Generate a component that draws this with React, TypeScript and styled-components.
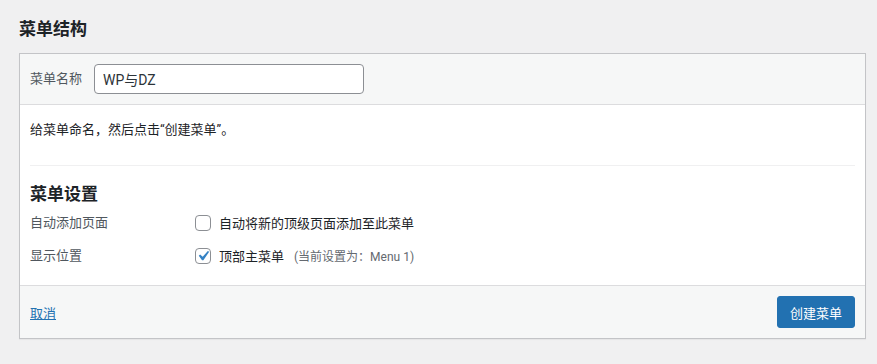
import React, { useState } from "react";
import styled, { createGlobalStyle } from "styled-components";

const GlobalStyle = createGlobalStyle`
  html, body {
    margin: 0;
    padding: 0;
    background: #f0f0f1;
  }
  body {
    font-family: "Segoe UI", Roboto, "Noto Sans CJK SC", sans-serif;
    font-size: 13px;
    color: #1d2327;
  }
`;

const Page = styled.div`
  padding: 17px 11px 26px 19px;
`;

const Title = styled.h2`
  margin: 0 0 12px;
  font-size: 17px;
  line-height: 24px;
  font-weight: 700;
  color: #1d2327;
`;

const Panel = styled.div`
  border: 1px solid #c3c4c7;
  background: #fff;
  box-shadow: 0 1px 1px rgba(0, 0, 0, 0.04);
`;

const Header = styled.div`
  display: flex;
  align-items: center;
  gap: 12px;
  height: 50px;
  padding: 0 10px;
  background: #f6f7f7;
  border-bottom: 1px solid #dcdcde;
`;

const Label = styled.label`
  color: #50575e;
  font-size: 13px;
  line-height: 18px;
`;

const NameInput = styled.input`
  box-sizing: border-box;
  width: 270px;
  height: 30px;
  padding: 0 8px;
  border: 1px solid #8c8f94;
  border-radius: 4px;
  font-family: inherit;
  font-size: 14px;
  color: #2c3338;
  background: #fff;
  outline: none;
`;

const Body = styled.div`
  padding: 16px 10px 13px;
`;

const Hint = styled.p`
  margin: 0 0 26px;
  line-height: 18px;
`;

const Divider = styled.hr`
  margin: 0;
  border: 0;
  border-top: 1px solid #f0f0f1;
`;

const SectionTitle = styled.h3`
  margin: 16px 0 0;
  font-size: 17px;
  line-height: 24px;
  font-weight: 700;
`;

const Row = styled.div`
  display: flex;
  align-items: center;
  height: 33px;
`;

const RowLabel = styled.div`
  width: 165px;
  color: #50575e;
  line-height: 18px;
`;

const Option = styled.label`
  display: flex;
  align-items: center;
  gap: 8px;
  cursor: pointer;
`;

const Box = styled.span<{ $checked: boolean }>`
  box-sizing: border-box;
  width: 16px;
  height: 16px;
  border: 1px solid #8c8f94;
  border-radius: 4px;
  background: #fff;
  display: flex;
  align-items: center;
  justify-content: center;
  overflow: visible;
  svg {
    display: ${({ $checked }) => ($checked ? "block" : "none")};
    flex: none;
  }
`;

const Note = styled.span`
  margin-left: 10px;
  color: #646970;
  font-size: 12px;
`;

const Footer = styled.div`
  display: flex;
  align-items: center;
  justify-content: space-between;
  padding: 10px;
  background: #f6f7f7;
  border-top: 1px solid #dcdcde;
`;

const CancelLink = styled.a`
  color: #2271b1;
  text-decoration: underline;
  cursor: pointer;
`;

const PrimaryButton = styled.button`
  height: 32px;
  padding: 0 12px;
  border: 1px solid #2271b1;
  border-radius: 3px;
  background: #2271b1;
  color: #fff;
  font-family: inherit;
  font-size: 13px;
  cursor: pointer;
`;

const Checkbox: React.FC<{ checked: boolean; onToggle: () => void; children: React.ReactNode }> = ({
  checked,
  onToggle,
  children,
}) => (
  <Option onClick={onToggle}>
    <Box $checked={checked}>
      <svg width="20" height="20" viewBox="0 0 20 20">
        <path d="M14.83 4.89l1.34.94-5.81 8.38H9.02L5.78 9.67l1.34-1.25 2.57 2.4z" fill="#3582c4" />
      </svg>
    </Box>
    {children}
  </Option>
);

export default function App() {
  const [name, setName] = useState("WP与DZ");
  const [autoAdd, setAutoAdd] = useState(false);
  const [primary, setPrimary] = useState(true);

  return (
    <Page>
      <GlobalStyle />
      <Title>菜单结构</Title>
      <Panel>
        <Header>
          <Label>菜单名称</Label>
          <NameInput value={name} onChange={(e) => setName(e.target.value)} />
        </Header>
        <Body>
          <Hint>给菜单命名，然后点击“创建菜单”。</Hint>
          <Divider />
          <SectionTitle>菜单设置</SectionTitle>
          <Row>
            <RowLabel>自动添加页面</RowLabel>
            <Checkbox checked={autoAdd} onToggle={() => setAutoAdd(!autoAdd)}>
              自动将新的顶级页面添加至此菜单
            </Checkbox>
          </Row>
          <Row>
            <RowLabel>显示位置</RowLabel>
            <Checkbox checked={primary} onToggle={() => setPrimary(!primary)}>
              <span>
                顶部主菜单
                <Note>(当前设置为：Menu 1)</Note>
              </span>
            </Checkbox>
          </Row>
        </Body>
        <Footer>
          <CancelLink>取消</CancelLink>
          <PrimaryButton>创建菜单</PrimaryButton>
        </Footer>
      </Panel>
    </Page>
  );
}
